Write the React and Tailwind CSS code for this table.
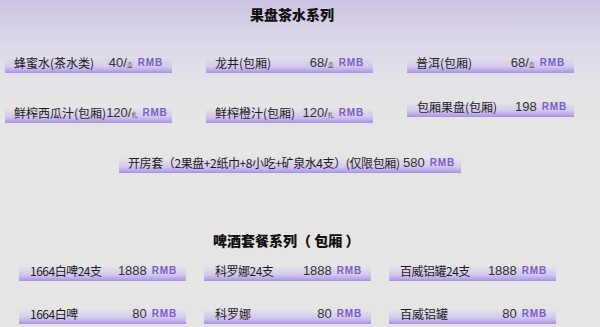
const teaRows = [
    [
        { name: "蜂蜜水(茶水类)", price: "40/", unit: "壶" },
        { name: "龙井(包厢)", price: "68/", unit: "壶" },
        { name: "普洱(包厢)", price: "68/", unit: "壶" },
    ],
];

function Item({ name, price, unit, className = "", w = "w-[167px]", pl = "pl-[9px]", pr = "pr-[9px]", nameCls = "" }) {
    return (
        <div
            className={`${w} ${pl} ${pr} h-[20px] pb-[4px] flex items-end justify-between bg-[linear-gradient(to_bottom,rgba(205,192,238,0)_25%,#d4c8ef_68%,#b9a5e7_90%,#a68ddc_100%)] ${className}`}
        >
            <span className={`text-[12px] leading-none text-[#1c1c1c] font-['Noto_Sans_CJK_SC',sans-serif] whitespace-nowrap ${nameCls}`}>
                {name}
            </span>
            <span className="flex items-end whitespace-nowrap">
                <span className="text-[13px] leading-none text-[#303030] font-['Liberation_Sans','Noto_Sans_CJK_SC',sans-serif]">
                    {price}
                </span>
                {unit && (
                    <span className="text-[6px] leading-none text-[#444] font-['Noto_Sans_CJK_SC',sans-serif] mb-[1px]">
                        {unit}
                    </span>
                )}
                <span className="ml-[5px] text-[10px] leading-none font-bold tracking-[0.8px] text-[#7a5ccb] font-['Liberation_Sans',sans-serif] mb-[1px]">
                    RMB
                </span>
            </span>
        </div>
    );
}

export default function App() {
    return (
        <div className="w-[600px] h-[327px] overflow-hidden bg-[linear-gradient(to_bottom,#cdc4e2_0px,#dcd8e8_45px,#e4e3e7_85px,#e5e5e5_120px)] font-['Noto_Sans_CJK_SC',sans-serif]">
            <div className="pt-[7px] pl-[250px] text-[14px] leading-[14px] font-black text-[#111]">
                果盘茶水系列
            </div>

            {teaRows.map((row, i) => (
                <div key={i} className="mt-[32px] pl-[5px] flex gap-[34px]">
                    {row.map((it) => (
                        <Item key={it.name} {...it} />
                    ))}
                </div>
            ))}

            <div className="mt-[24px] pl-[5px] flex items-start gap-[34px]">
                <Item className="mt-[6px]" name="鲜榨西瓜汁(包厢)" price="120/" unit="扎" />
                <Item className="mt-[6px]" name="鲜榨橙汁(包厢)" price="120/" unit="扎" />
                <Item name="包厢果盘(包厢)" price="198" pl="pl-[10px]" pr="pr-[7px]" />
            </div>

            <div className="mt-[30px] pl-[119px] flex">
                <Item
                    w="w-[342px]"
                    pr="pr-[6px]"
                    nameCls="tracking-[-0.4px]"
                    name="开房套（2果盘+2纸巾+8小吃+矿泉水4支）(仅限包厢)"
                    price="580"
                />
            </div>

            <div className="mt-[60px] pl-[213px] text-[14px] leading-[14px] font-black text-[#111]">
                啤酒套餐系列（ 包厢 ）
            </div>

            <div className="mt-[14px] pl-[19px] flex gap-[18px]">
                <Item pl="pl-[11px]" nameCls="tracking-[-0.5px]" name="1664白啤24支" price="1888" />
                <Item pl="pl-[11px]" nameCls="tracking-[-0.5px]" name="科罗娜24支" price="1888" />
                <Item pl="pl-[11px]" nameCls="tracking-[-0.5px]" name="百威铝罐24支" price="1888" />
            </div>

            <div className="mt-[23px] pl-[19px] flex gap-[18px]">
                <Item pl="pl-[11px]" nameCls="tracking-[-0.5px]" name="1664白啤" price="80" />
                <Item pl="pl-[11px]" name="科罗娜" price="80" />
                <Item pl="pl-[11px]" name="百威铝罐" price="80" />
            </div>
        </div>
    );
}
